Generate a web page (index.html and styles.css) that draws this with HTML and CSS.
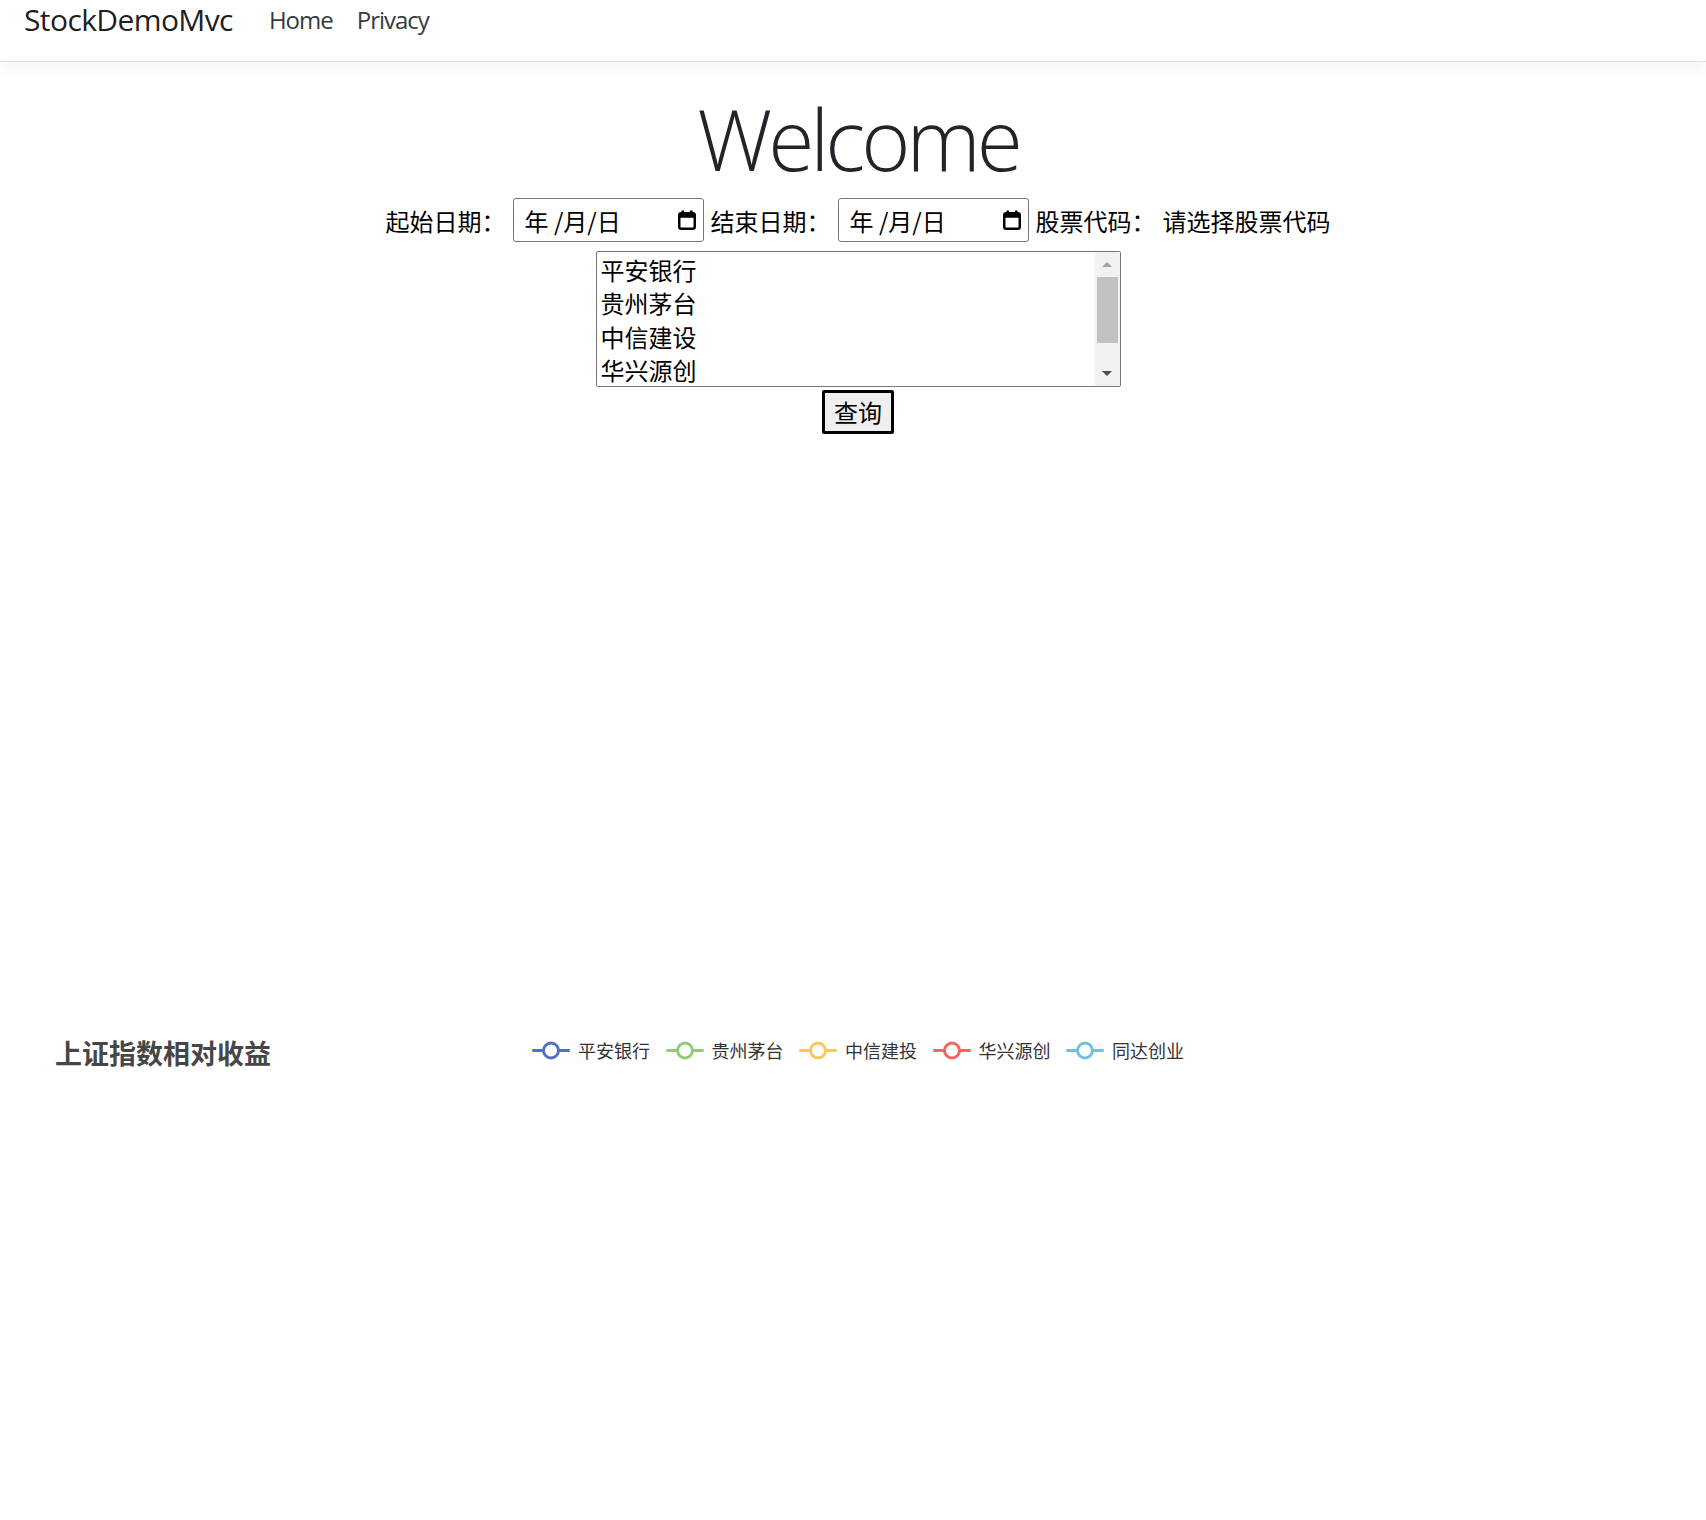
FILE: index.html
```html
<!DOCTYPE html>
<html lang="zh-CN">
<head>
<meta charset="utf-8">
<title>Home Page - StockDemoMvc</title>
<link rel="stylesheet" href="styles.css">
</head>
<body>
<header class="navbar">
  <a class="brand" href="#">StockDemoMvc</a>
  <nav class="nav">
    <a class="nav-link" href="#">Home</a>
    <a class="nav-link" href="#">Privacy</a>
  </nav>
</header>
<main class="main">
  <h1 class="display">Welcome</h1>
  <div class="form-row">
    <span class="label">起始日期：</span>
    <div class="date-input">
      <span class="date-text">年 /月/日</span>
      <svg class="cal" width="18" height="20" viewBox="0 0 18 20" aria-hidden="true"><rect x="1.25" y="3.25" width="15.5" height="15.5" rx="2" fill="none" stroke="#000" stroke-width="2.5"/><rect x="1.25" y="3.25" width="15.5" height="4.5" fill="#000"/><rect x="3.5" y="0.5" width="2.5" height="4" fill="#000"/><rect x="12" y="0.5" width="2.5" height="4" fill="#000"/></svg>
    </div>
    <span class="label">结束日期：</span>
    <div class="date-input">
      <span class="date-text">年 /月/日</span>
      <svg class="cal" width="18" height="20" viewBox="0 0 18 20" aria-hidden="true"><rect x="1.25" y="3.25" width="15.5" height="15.5" rx="2" fill="none" stroke="#000" stroke-width="2.5"/><rect x="1.25" y="3.25" width="15.5" height="4.5" fill="#000"/><rect x="3.5" y="0.5" width="2.5" height="4" fill="#000"/><rect x="12" y="0.5" width="2.5" height="4" fill="#000"/></svg>
    </div>
    <span class="label">股票代码：</span>
    <span class="label">请选择股票代码</span>
  </div>
  <div class="listbox">
    <div class="options">
      <div class="option">平安银行</div>
      <div class="option">贵州茅台</div>
      <div class="option">中信建设</div>
      <div class="option">华兴源创</div>
    </div>
    <div class="scrollbar">
      <div class="sb-btn"><span class="arrow-up"></span></div>
      <div class="sb-track"><div class="sb-thumb"></div></div>
      <div class="sb-btn"><span class="arrow-down"></span></div>
    </div>
  </div>
  <button class="query-btn" type="button">查询</button>
  <div class="chart chart-empty"></div>
  <div class="chart chart-main">
    <div class="chart-title">上证指数相对收益</div>
    <div class="legend">
      <div class="legend-item">
        <svg width="38" height="21" viewBox="0 0 25 14"><line x1="0" y1="7" x2="25" y2="7" stroke="#5470c6" stroke-width="2"/><circle cx="12.5" cy="7" r="5" fill="#fff" stroke="#5470c6" stroke-width="2"/></svg>
        <span>平安银行</span>
      </div>
      <div class="legend-item">
        <svg width="38" height="21" viewBox="0 0 25 14"><line x1="0" y1="7" x2="25" y2="7" stroke="#91cc75" stroke-width="2"/><circle cx="12.5" cy="7" r="5" fill="#fff" stroke="#91cc75" stroke-width="2"/></svg>
        <span>贵州茅台</span>
      </div>
      <div class="legend-item">
        <svg width="38" height="21" viewBox="0 0 25 14"><line x1="0" y1="7" x2="25" y2="7" stroke="#fac858" stroke-width="2"/><circle cx="12.5" cy="7" r="5" fill="#fff" stroke="#fac858" stroke-width="2"/></svg>
        <span>中信建投</span>
      </div>
      <div class="legend-item">
        <svg width="38" height="21" viewBox="0 0 25 14"><line x1="0" y1="7" x2="25" y2="7" stroke="#ee6666" stroke-width="2"/><circle cx="12.5" cy="7" r="5" fill="#fff" stroke="#ee6666" stroke-width="2"/></svg>
        <span>华兴源创</span>
      </div>
      <div class="legend-item">
        <svg width="38" height="21" viewBox="0 0 25 14"><line x1="0" y1="7" x2="25" y2="7" stroke="#73c0de" stroke-width="2"/><circle cx="12.5" cy="7" r="5" fill="#fff" stroke="#73c0de" stroke-width="2"/></svg>
        <span>同达创业</span>
      </div>
    </div>
    <div></div>
  </div>
</main>
</body>
</html>
```
FILE: styles.css
```css
* { box-sizing: border-box; }

html, body {
  margin: 0;
  padding: 0;
  background: #fff;
}

body {
  font-family: "Open Sans", "Noto Sans CJK SC", sans-serif;
  font-size: 24px;
  color: #212529;
  overflow: hidden;
}

.navbar {
  display: flex;
  align-items: center;
  height: 62px;
  padding: 0 24px 21px 24px;
  background: #fff;
  border-bottom: 1px solid #e2e2e2;
  box-shadow: 0 6px 18px rgba(0, 0, 0, 0.05);
  position: relative;
}

.brand {
  font-size: 30px;
  line-height: 40px;
  color: rgba(0, 0, 0, 0.9);
  text-decoration: none;
  margin-right: 24px;
  letter-spacing: -0.6px;
}

.nav {
  display: flex;
}

.nav-link {
  font-size: 24px;
  line-height: 40px;
  padding: 0 12px;
  color: #343a40;
  text-decoration: none;
  letter-spacing: -1px;
}

.main {
  padding: 27px 24px 0 34px;
  text-align: center;
}

.display {
  margin: 0;
  font-size: 84px;
  font-weight: 300;
  line-height: 100.8px;
  color: #212529;
  letter-spacing: -4px;
}

.form-row {
  display: flex;
  justify-content: center;
  align-items: center;
  gap: 7px;
  margin-top: 8.5px;
  font-family: "Noto Sans CJK SC", sans-serif;
  color: #000;
}

.label {
  font-size: 24px;
  line-height: 42px;
  padding-top: 2px;
}

.date-input {
  display: flex;
  align-items: center;
  justify-content: space-between;
  width: 191px;
  height: 44px;
  padding: 0 7px 0 11px;
  border: 1px solid #767676;
  border-radius: 3px;
  background: #fff;
}

.date-text {
  font-size: 24px;
  line-height: 40px;
  padding-top: 2px;
  white-space: pre;
}

.cal {
  display: block;
}

.listbox {
  display: flex;
  width: 525px;
  height: 136px;
  margin: 9px auto 0;
  border: 1px solid #767676;
  border-radius: 2px;
  background: #fff;
  text-align: left;
  font-family: "Noto Sans CJK SC", sans-serif;
  color: #000;
}

.options {
  flex: 1;
  padding-top: 0.75px;
}

.option {
  height: 33.25px;
  line-height: 33.25px;
  padding-left: 4px;
  font-size: 24px;
  white-space: nowrap;
}

.scrollbar {
  width: 25px;
  display: flex;
  flex-direction: column;
  background: #f1f1f1;
}

.sb-btn {
  height: 25px;
  display: flex;
  align-items: center;
  justify-content: center;
}

.arrow-up {
  width: 0;
  height: 0;
  border-left: 5px solid transparent;
  border-right: 5px solid transparent;
  border-bottom: 5px solid #a3a3a3;
}

.arrow-down {
  width: 0;
  height: 0;
  border-left: 5px solid transparent;
  border-right: 5px solid transparent;
  border-top: 5px solid #505050;
}

.sb-track {
  flex: 1;
}

.sb-thumb {
  height: 66px;
  margin: 0 2px;
  background: #c1c1c1;
}

.query-btn {
  display: block;
  margin: 3px auto 0;
  width: 72px;
  height: 44px;
  padding: 0;
  border: 3px solid #000;
  border-radius: 2px;
  background: #efefef;
  font-family: "Noto Sans CJK SC", sans-serif;
  font-size: 24px;
  line-height: 38px;
  color: #000;
}

.chart-empty {
  height: 600px;
}

.chart-main {
  height: 600px;
  display: grid;
  grid-template-columns: 1fr auto 1fr;
  align-items: start;
  padding: 0 21px;
  text-align: left;
}

.chart-title {
  margin-top: 5px;
  font-family: "Noto Sans CJK SC", sans-serif;
  font-size: 27px;
  font-weight: 700;
  line-height: 27px;
  color: #464646;
  white-space: nowrap;
}

.legend {
  display: flex;
  gap: 15.5px;
  margin-top: 6px;
}

.legend-item {
  display: flex;
  align-items: center;
  gap: 8px;
  height: 21px;
  font-family: "Noto Sans CJK SC", sans-serif;
  font-size: 18px;
  line-height: 21px;
  color: #333;
}

.legend-item svg {
  display: block;
}
```
